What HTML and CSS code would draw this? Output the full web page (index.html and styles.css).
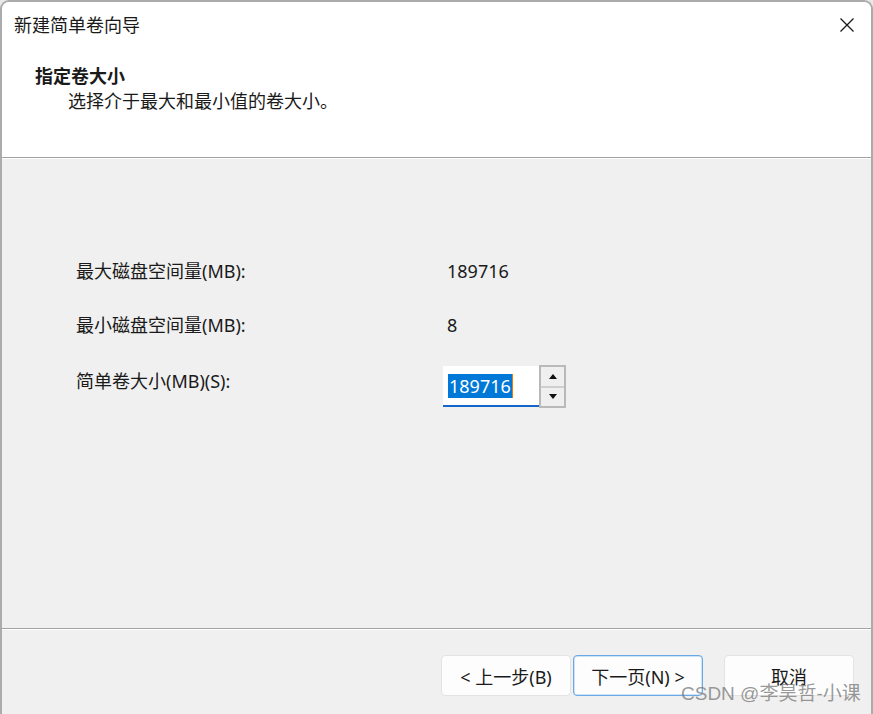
FILE: index.html
```html
<!DOCTYPE html>
<html lang="zh-CN">
<head>
<meta charset="utf-8">
<title>新建简单卷向导</title>
<link rel="stylesheet" href="styles.css">
</head>
<body>
<div class="window">
  <div class="header">
    <div class="titlebar">
      <span class="title">新建简单卷向导</span>
      <span class="close" aria-label="关闭">
        <svg width="16" height="16" viewBox="0 0 16 16"><path d="M1.5 1.5 L14.5 14.5 M14.5 1.5 L1.5 14.5" stroke="#1a1a1a" stroke-width="1.3" fill="none"/></svg>
      </span>
    </div>
    <div class="heading">指定卷大小</div>
    <div class="subtitle">选择介于最大和最小值的卷大小。</div>
  </div>
  <div class="content">
    <div class="form">
      <div class="label">最大磁盘空间量(MB):</div>
      <div class="value">189716</div>
      <div class="label">最小磁盘空间量(MB):</div>
      <div class="value">8</div>
      <div class="label last">简单卷大小(MB)(S):</div>
      <div class="spin">
        <div class="input"><span class="sel">189716</span><span class="caret"></span></div>
        <div class="spinbtns">
          <div class="sbtn"><svg width="8" height="5" viewBox="0 0 8 5"><path d="M0 5 L4 0 L8 5 Z" fill="#111"/></svg></div>
          <div class="sbtn"><svg width="8" height="5" viewBox="0 0 8 5"><path d="M0 0 L4 5 L8 0 Z" fill="#111"/></svg></div>
        </div>
      </div>
    </div>
  </div>
  <div class="footer">
    <button class="btn">&lt; 上一步(B)</button>
    <button class="btn primary">下一页(N) &gt;</button>
    <button class="btn cancel">取消</button>
    <div class="watermark">CSDN @李昊哲-小课</div>
  </div>
</div>
</body>
</html>
```

FILE: styles.css
```css
* { box-sizing: border-box; }
html, body { margin: 0; padding: 0; }
body {
  background: #e9e9e9;
  font-family: "Noto Sans", "Noto Sans CJK SC", sans-serif;
  color: #1a1a1a;
  font-size: 18px;
}
.window {
  position: relative;
  width: 873px;
  height: 714px;
  border: 2px solid #ababab;
  border-bottom: none;
  border-radius: 9px 9px 0 0;
  background: #f0f0f0;
  overflow: hidden;
  display: flex;
  flex-direction: column;
}
.header {
  background: #ffffff;
  height: 156px;
  border-bottom: 1px solid #a3a3a3;
  flex: none;
}
.titlebar {
  display: flex;
  align-items: center;
  justify-content: space-between;
  height: 24px;
  margin-top: 11px;
  padding: 0 16px 0 12px;
}
.title { line-height: 24px; }
.close { display: flex; width: 16px; height: 16px; }
.heading {
  margin-top: 27px;
  padding-left: 33px;
  font-weight: bold;
  line-height: 24px;
}
.subtitle {
  margin-top: 1px;
  padding-left: 66px;
  line-height: 24px;
}
.content {
  flex: 1;
  border-top: 1px solid #ffffff;
  border-bottom: 1px solid #a3a3a3;
  padding: 100px 0 0 74px;
}
.form {
  display: grid;
  grid-template-columns: 367px auto;
  grid-template-rows: 24px 24px 42px;
  row-gap: 30px;
  align-items: start;
}
.label, .value { line-height: 24px; }
.value { padding-left: 4px; }
.label.last { margin-top: 2px; }
.spin {
  display: flex;
  align-items: flex-start;
  margin-top: -2px;
}
.input {
  width: 96px;
  height: 41px;
  margin-top: 1px;
  background: #ffffff;
  border-bottom: 2px solid #1466c8;
  display: flex;
  align-items: center;
  padding-left: 5px;
}
.sel {
  background: #0078d7;
  color: #ffffff;
  line-height: 24px;
  padding: 0 1px;
}
.caret {
  width: 1px;
  height: 24px;
  background: #f07800;
}
.spinbtns {
  width: 27px;
  height: 43px;
  border: 2px solid #b9b9b9;
  background: #cfcfcf;
  display: flex;
  flex-direction: column;
  gap: 2px;
}
.sbtn {
  flex: 1;
  background: #efefef;
  display: flex;
  align-items: center;
  justify-content: center;
}
.footer {
  position: relative;
  height: 85px;
  border-top: 1px solid #ffffff;
  display: flex;
  align-items: flex-start;
  padding: 25px 0 0 439px;
  flex: none;
}
.btn {
  width: 130px;
  height: 41px;
  background: #fdfdfd;
  border: 1px solid #e3e3e3;
  border-radius: 4px;
  font-family: inherit;
  font-size: 18px;
  color: #1a1a1a;
  padding: 0;
  margin-right: 2px;
}
.btn.primary {
  border: 1px solid #6aa9e6;
  box-shadow: inset 0 0 0 0.5px #9cc8f0;
}
.btn.cancel { margin-left: 19px; }
.watermark {
  position: absolute;
  left: 679px;
  top: 52px;
  font-size: 19px;
  line-height: 24px;
  color: rgba(120,120,120,0.75);
  font-family: "Liberation Sans", "Noto Sans CJK SC", sans-serif;
  white-space: nowrap;
}
```
